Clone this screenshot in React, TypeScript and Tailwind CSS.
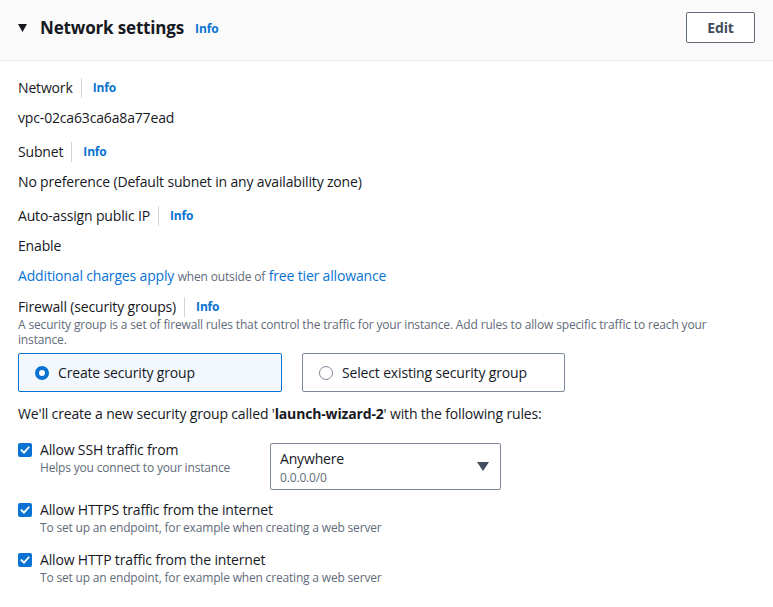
import React from "react";

function Info() {
  return (
    <span className="ml-[8px] border-l border-[#d1d5db] pl-[11px] text-[12px] font-bold leading-[20px] text-[#0972d3]">
      Info
    </span>
  );
}

function Label({ text }: { text: string }) {
  return (
    <div className="flex items-center text-[14px] leading-[20px] text-[#16191f]">
      <span>{text}</span>
      <Info />
    </div>
  );
}

function Check() {
  return (
    <span className="mt-[3px] flex h-[14px] w-[14px] shrink-0 items-center justify-center rounded-[2px] bg-[#0972d3]">
      <svg width="10" height="10" viewBox="0 0 10 10" fill="none">
        <path d="M1.5 5.2 L4 7.6 L8.6 2.4" stroke="white" strokeWidth="1.8" strokeLinecap="square" />
      </svg>
    </span>
  );
}

function Rule({ title, desc, className = "" }: { title: string; desc: string; className?: string }) {
  return (
    <div className={"flex gap-[8px] " + className}>
      <Check />
      <div>
        <div className="text-[14px] leading-[20px] text-[#16191f]">{title}</div>
        <div className="text-[12px] leading-[16px] tracking-[-0.015em] text-[#5f6b7a]">{desc}</div>
      </div>
    </div>
  );
}

export default function App() {
  return (
    <div className="min-h-[607px] w-[773px] bg-white font-['Open_Sans',sans-serif] tracking-[-0.01em] text-[#16191f]">
      <div className="flex h-[61px] items-start justify-between border-b border-[#e9ebed] bg-[#fafafa] px-[18px] pt-[12px]">
        <div className="flex h-[31px] items-center">
          <svg width="9" height="8" viewBox="0 0 9 8" className="mr-[13px] mt-[1px]">
            <path d="M0 0 H9 L4.5 8 Z" fill="#16191f" />
          </svg>
          <span className="text-[17px] font-bold leading-[22px]">Network settings</span>
          <span className="ml-[11px] mt-[2px] text-[12px] font-bold text-[#0972d3]">Info</span>
        </div>
        <button className="h-[31px] w-[69px] rounded-[2px] border border-[#5f6b7a] bg-white text-[14px] font-bold text-[#414d5c]">
          Edit
        </button>
      </div>

      <div className="px-[18px] pt-[17px]">
        <Label text="Network" />
        <div className="mt-[10px] text-[14px] leading-[20px]">vpc-02ca63ca6a8a77ead</div>

        <div className="mt-[14px]">
          <Label text="Subnet" />
        </div>
        <div className="mt-[10px] text-[14px] leading-[20px]">
          No preference (Default subnet in any availability zone)
        </div>

        <div className="mt-[14px]">
          <Label text="Auto-assign public IP" />
        </div>
        <div className="mt-[10px] text-[14px] leading-[20px]">Enable</div>

        <div className="mt-[10px] text-[14px] leading-[20px]">
          <span className="text-[#0972d3]">Additional charges apply</span>{" "}
          <span className="text-[12px] text-[#5f6b7a]">when outside of</span>{" "}
          <span className="text-[#0972d3]">free tier allowance</span>
        </div>

        <div className="mt-[10px]">
          <Label text="Firewall (security groups)" />
        </div>
        <div className="max-w-[720px] text-[12px] leading-[15px] tracking-[-0.013em] text-[#5f6b7a]">
          A security group is a set of firewall rules that control the traffic for your instance. Add rules to allow
          specific traffic to reach your instance.
        </div>

        <div className="mt-[6px] flex gap-[20px]">
          <div className="flex h-[39px] w-[264px] items-center rounded-[2px] border border-[#0972d3] bg-[#f2f8fd] pl-[16px]">
            <span className="h-[14px] w-[14px] rounded-full border-[4px] border-[#0972d3] bg-white" />
            <span className="ml-[9px] text-[14px]">Create security group</span>
          </div>
          <div className="flex h-[39px] w-[263px] items-center rounded-[2px] border border-[#7d8998] bg-white pl-[16px]">
            <span className="h-[14px] w-[14px] rounded-full border-[1.5px] border-[#7d8998] bg-white" />
            <span className="ml-[9px] text-[14px]">Select existing security group</span>
          </div>
        </div>

        <div className="mt-[12px] text-[14px] leading-[20px]">
          We'll create a new security group called '<span className="font-bold">launch-wizard-2</span>' with the
          following rules:
        </div>

        <div className="mt-[16px] flex">
          <Rule title="Allow SSH traffic from" desc="Helps you connect to your instance" className="w-[252px]" />
          <div className="mt-[3px] flex h-[47px] w-[231px] items-center justify-between rounded-[2px] border border-[#7d8998] pl-[9px] pr-[11px]">
            <div className="self-start pt-[5px]">
              <div className="text-[14px] leading-[20px]">Anywhere</div>
              <div className="text-[12px] leading-[18px] text-[#5f6b7a]">0.0.0.0/0</div>
            </div>
            <svg width="12" height="9" viewBox="0 0 12 9">
              <path d="M0 0 H12 L6 9 Z" fill="#414d5c" />
            </svg>
          </div>
        </div>

        <Rule
          className="mt-[10px]"
          title="Allow HTTPS traffic from the internet"
          desc="To set up an endpoint, for example when creating a web server"
        />
        <Rule
          className="mt-[14px]"
          title="Allow HTTP traffic from the internet"
          desc="To set up an endpoint, for example when creating a web server"
        />
      </div>
    </div>
  );
}
